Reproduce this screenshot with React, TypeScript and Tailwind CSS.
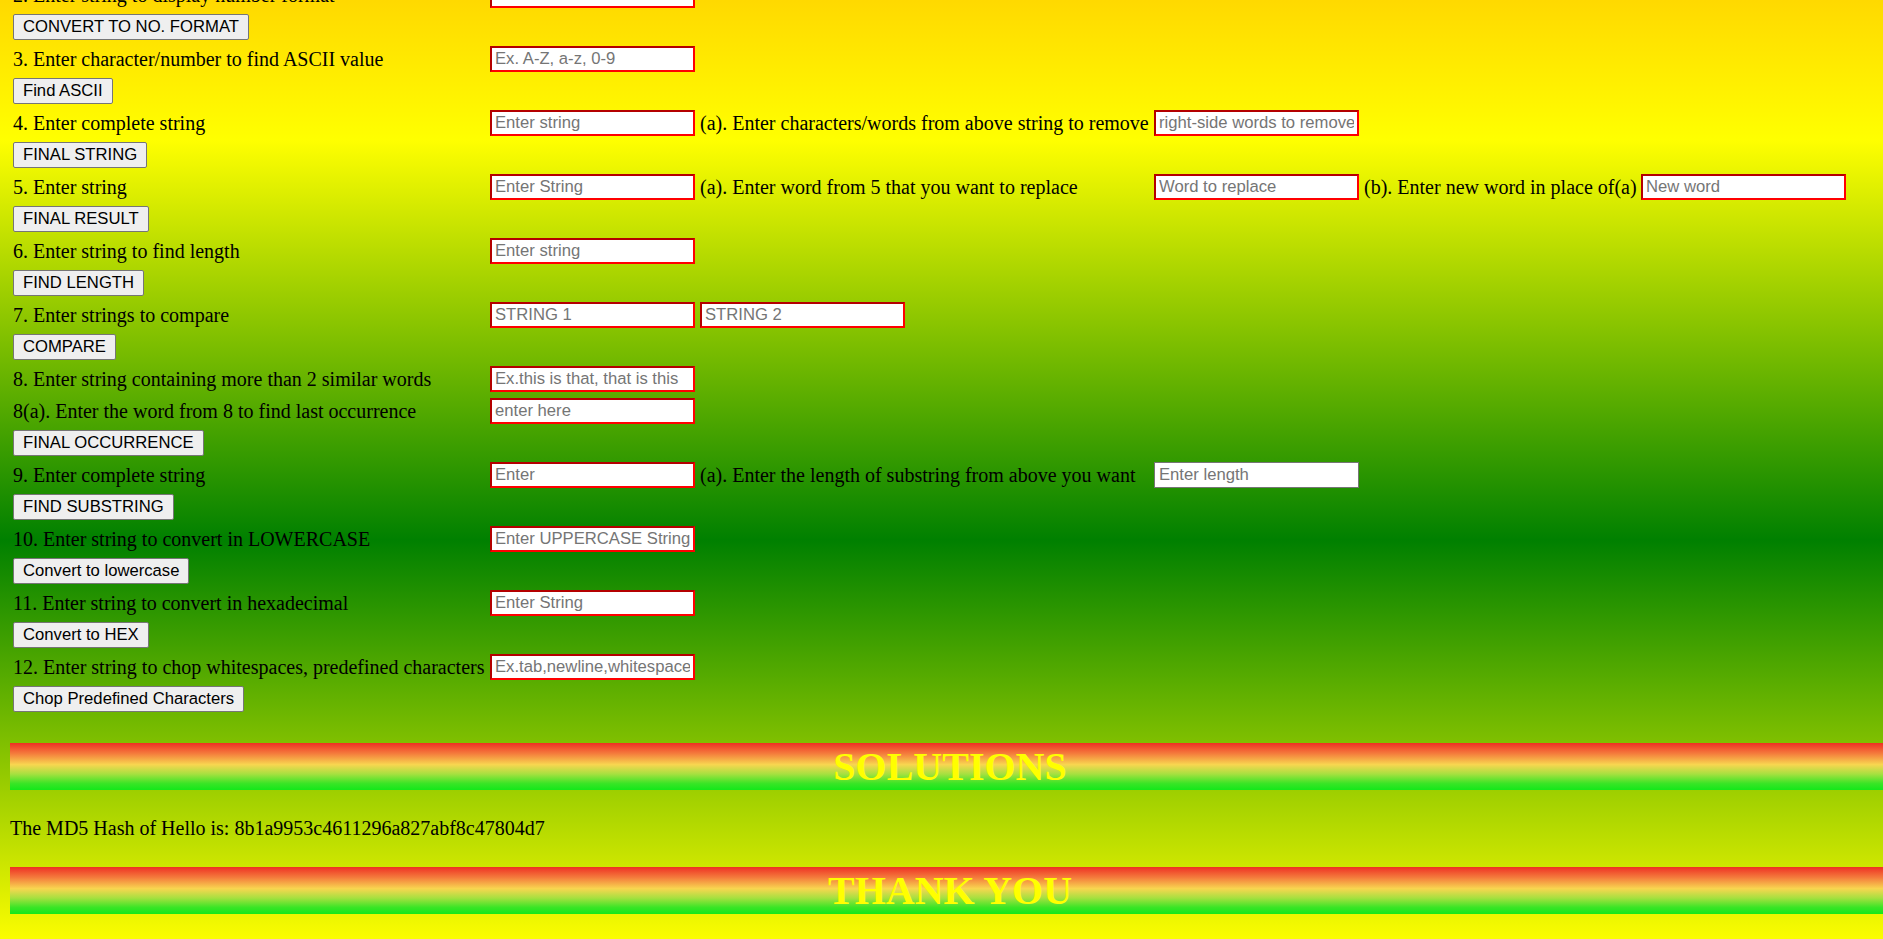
import React from "react";

type Cell =
  | { k: "label"; t: string }
  | { k: "input"; ph: string; gray?: boolean }
  | { k: "button"; t: string }
  | { k: "empty" };

const L = (t: string): Cell => ({ k: "label", t });
const I = (ph: string, gray?: boolean): Cell => ({ k: "input", ph, gray });
const B = (t: string): Cell => ({ k: "button", t });

const rows: Cell[][] = [
  [L("2. Enter string to display number format"), I("")],
  [B("CONVERT TO NO. FORMAT")],
  [L("3. Enter character/number to find ASCII value"), I("Ex. A-Z, a-z, 0-9")],
  [B("Find ASCII")],
  [
    L("4. Enter complete string"),
    I("Enter string"),
    L("(a). Enter characters/words from above string to remove"),
    I("right-side words to remove"),
  ],
  [B("FINAL STRING")],
  [
    L("5. Enter string"),
    I("Enter String"),
    L("(a). Enter word from 5 that you want to replace"),
    I("Word to replace"),
    L("(b). Enter new word in place of(a)"),
    I("New word"),
  ],
  [B("FINAL RESULT")],
  [L("6. Enter string to find length"), I("Enter string")],
  [B("FIND LENGTH")],
  [L("7. Enter strings to compare"), I("STRING 1"), I("STRING 2")],
  [B("COMPARE")],
  [L("8. Enter string containing more than 2 similar words"), I("Ex.this is that, that is this")],
  [L("8(a). Enter the word from 8 to find last occurrence"), I("enter here")],
  [B("FINAL OCCURRENCE")],
  [
    L("9. Enter complete string"),
    I("Enter"),
    L("(a). Enter the length of substring from above you want"),
    I("Enter length", true),
  ],
  [B("FIND SUBSTRING")],
  [L("10. Enter string to convert in LOWERCASE"), I("Enter UPPERCASE String")],
  [B("Convert to lowercase")],
  [L("11. Enter string to convert in hexadecimal"), I("Enter String")],
  [B("Convert to HEX")],
  [L("12. Enter string to chop whitespaces, predefined characters"), I("Ex.tab,newline,whitespace")],
  [B("Chop Predefined Characters")],
];

function CellView({ c }: { c: Cell }) {
  if (c.k === "label")
    return <div className="whitespace-nowrap text-[20px] leading-[23px] text-black">{c.t}</div>;
  if (c.k === "button")
    return (
      <div>
        <button className="h-[26px] whitespace-nowrap rounded-[2px] border border-[#767676] bg-[#efefef] px-[9px] font-['Liberation_Sans',Arial,sans-serif] text-[16.67px] leading-none text-black">
          {c.t}
        </button>
      </div>
    );
  if (c.k === "input")
    return (
      <div className="flex">
        <input
          placeholder={c.ph}
          className={
            c.gray
              ? "h-[26px] w-[205px] border border-[#767676] bg-white px-[4px] font-['Liberation_Sans',Arial,sans-serif] text-[16.67px] text-black outline-none placeholder:text-[#757575]"
              : "h-[26px] w-[205px] border-2 border-t-[#b40000] border-l-[#b40000] border-r-[#ff0000] border-b-[#ff0000] bg-white px-[3px] font-['Liberation_Sans',Arial,sans-serif] text-[16.67px] text-black outline-none placeholder:text-[#757575]"
          }
        />
      </div>
    );
  return <div />;
}

function Banner({ text }: { text: string }) {
  return (
    <div className="ml-[10px] h-[47px] w-[1880px] bg-[linear-gradient(180deg,#ee3024_0%,#f47a3c_22%,#f8d650_46%,#a6e040_66%,#3ae526_86%,#14e81a_100%)] text-center text-[40px] font-bold leading-[47px] text-[#ffff00]">
      {text}
    </div>
  );
}

export default function App() {
  return (
    <div className="h-[939px] w-full overflow-hidden bg-[linear-gradient(180deg,#ffd900_0px,#ffff00_140px,#008000_540px,#ffff00_945px)] font-['Liberation_Serif','Times_New_Roman',serif] text-black">
      <div className="mt-[-21px]">
        <div className="flex flex-col pl-[13px]">
          {rows.map((r, i) => (
            <div
              key={i}
              className="grid h-[32px] grid-cols-[472px_205px_449px_205px_272px_205px] items-center gap-x-[5px]"
            >
              {r.map((c, j) => (
                <CellView key={j} c={c} />
              ))}
            </div>
          ))}
        </div>
        <div className="mt-[28px]">
          <Banner text="SOLUTIONS" />
        </div>
        <div className="ml-[10px] mt-[27px] mb-[27px] text-[20px] leading-[23px]">
          The MD5 Hash of Hello is: 8b1a9953c4611296a827abf8c47804d7
        </div>
        <Banner text="THANK YOU" />
      </div>
    </div>
  );
}
